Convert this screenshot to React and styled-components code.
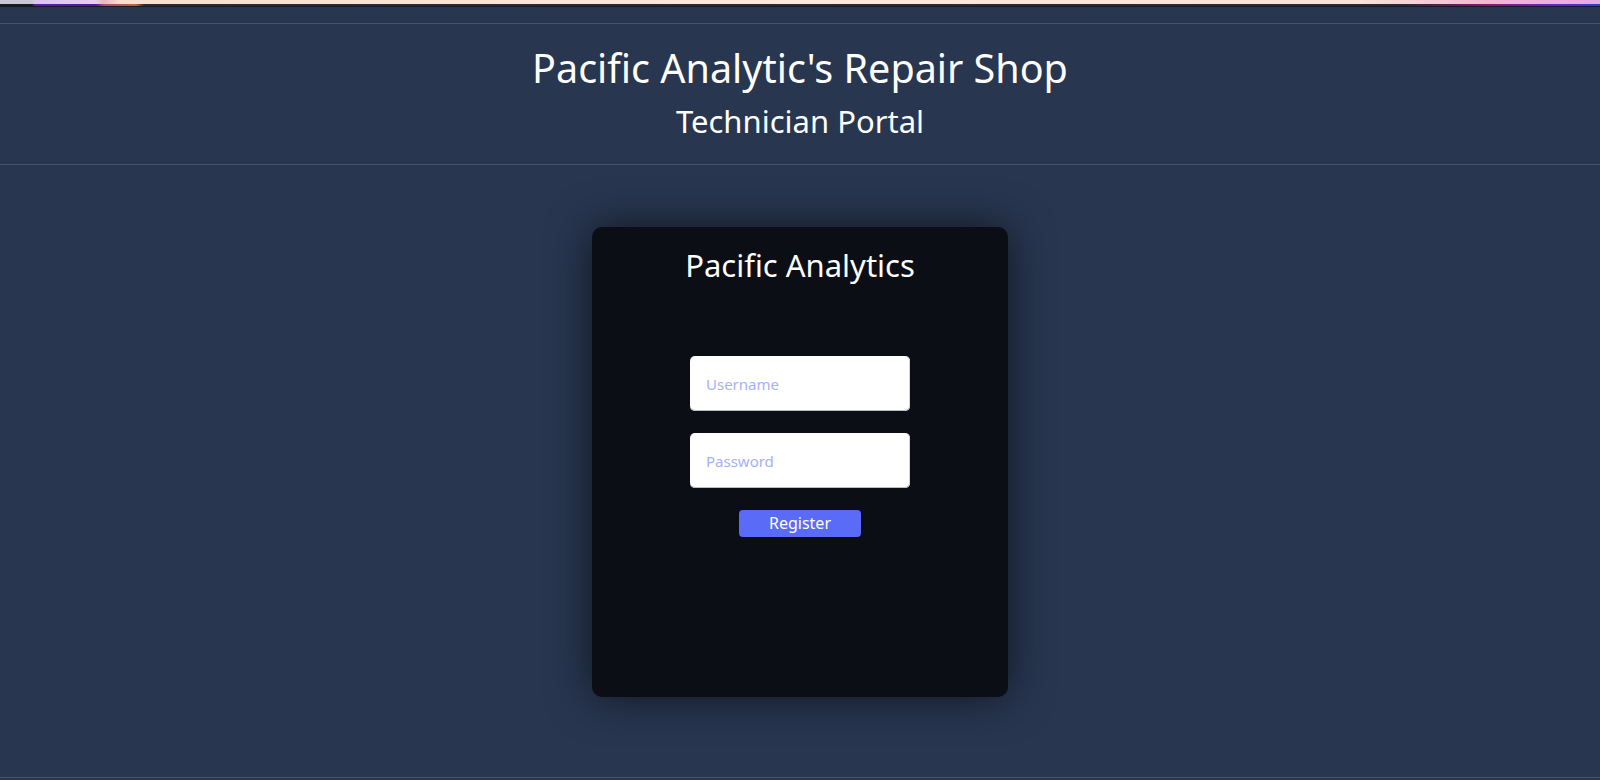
import React from 'react';
import styled, { createGlobalStyle } from 'styled-components';

const GlobalStyle = createGlobalStyle`
  html, body {
    margin: 0;
    padding: 0;
    background: #283650;
  }
  body {
    font-family: "Noto Sans", "Open Sans", sans-serif;
    color: #ffffff;
  }
  * {
    box-sizing: border-box;
  }
`;

const App = () => {
  return (
    <Page>
      <GlobalStyle />
      <Strip>
        <StripLight />
        <StripColor />
        <StripDark />
      </Strip>
      <Header>
        <Title>Pacific Analytic's Repair Shop</Title>
        <Subtitle>Technician Portal</Subtitle>
      </Header>
      <Main>
        <Card>
          <CardTitle>Pacific Analytics</CardTitle>
          <Form onSubmit={(e) => e.preventDefault()}>
            <Input type="text" placeholder="Username" />
            <Input type="password" placeholder="Password" />
            <Button type="submit">Register</Button>
          </Form>
        </Card>
      </Main>
      <Footer />
    </Page>
  );
};

export default App;

const Page = styled.div`
  min-height: 100vh;
  display: flex;
  flex-direction: column;
  background: #283650;
`;

const Strip = styled.div`
  display: flex;
  flex-direction: column;
  margin-bottom: 16px;
`;

const StripLight = styled.div`
  height: 4px;
  background: linear-gradient(
    90deg,
    #c9c9d2 0%,
    #c9c9d2 2%,
    #d9c6f2 2.2%,
    #e6cdf0 6%,
    #e8b7c4 6.5%,
    #f8dfcf 7.5%,
    #fbe9da 50%,
    #f9e2d6 85%,
    #f0b8d8 93%,
    #e9a9e4 100%
  );
`;

const StripColor = styled.div`
  height: 2px;
  background: linear-gradient(
    90deg,
    #1b1b24 0%,
    #1b1b24 2%,
    #5a1fb0 2.2%,
    #4e1aa0 6%,
    #b04a70 6.5%,
    #c2653a 8.5%,
    #2a2a36 9%,
    #2a2a36 88%,
    #8a1a6a 93%,
    #5a2ad0 97%,
    #3b38d8 100%
  );
`;

const StripDark = styled.div`
  height: 1px;
  background: #141a26;
`;

const Header = styled.header`
  display: flex;
  flex-direction: column;
  align-items: center;
  border-top: 1px solid #46536a;
  border-bottom: 1px solid #46536a;
  padding: 17px 0 21px;
`;

const Title = styled.h1`
  margin: 0;
  font-size: 39.5px;
  font-weight: 400;
  line-height: 55px;
  color: #ffffff;
`;

const Subtitle = styled.h2`
  margin: 4px 0 0;
  font-size: 31px;
  font-weight: 400;
  line-height: 43px;
  color: #ffffff;
`;

const Main = styled.main`
  flex: 1;
  display: flex;
  justify-content: center;
  align-items: flex-start;
  padding-top: 62px;
`;

const Card = styled.section`
  width: 416px;
  height: 470px;
  background: #0b0e15;
  border-radius: 10px;
  box-shadow: 0 0 44px rgba(0, 0, 0, 0.6);
  display: flex;
  flex-direction: column;
  align-items: center;
  padding-top: 17px;
`;

const CardTitle = styled.h2`
  margin: 0;
  font-size: 31px;
  font-weight: 400;
  line-height: 43px;
  color: #ffffff;
`;

const Form = styled.form`
  display: flex;
  flex-direction: column;
  align-items: center;
  gap: 22px;
  margin-top: 69px;
`;

const Input = styled.input`
  width: 220px;
  height: 55px;
  border: none;
  border-radius: 5px;
  background: #ffffff;
  box-shadow: inset 0 -1px 0 #b9bcc4, inset -1px 0 0 #d4d6dc;
  padding: 0 16px;
  font-family: "Noto Sans", "Open Sans", sans-serif;
  font-size: 15px;
  color: #1a1a1a;
  outline: none;

  &::placeholder {
    color: #a6b0f8;
  }
`;

const Button = styled.button`
  width: 122px;
  height: 27px;
  border: none;
  border-radius: 4px;
  background: #5a6bf7;
  color: #ffffff;
  font-family: "Noto Sans", "Open Sans", sans-serif;
  font-size: 16px;
  line-height: 27px;
  padding: 0;
  cursor: pointer;
`;

const Footer = styled.footer`
  height: 3px;
  border-top: 1px solid #46536a;
`;
